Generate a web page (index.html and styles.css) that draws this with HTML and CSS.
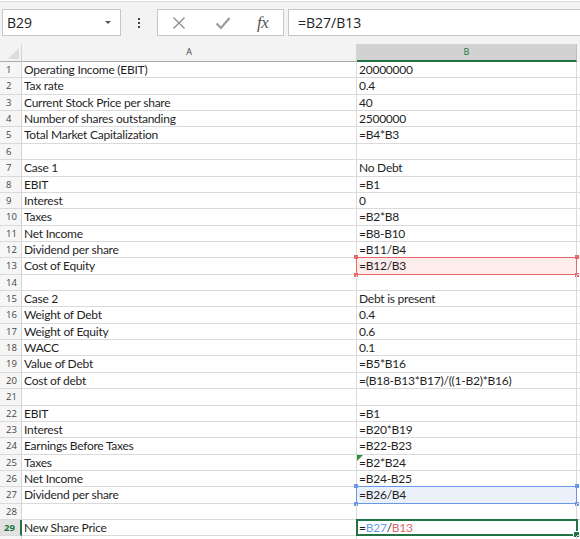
FILE: index.html
```html
<!DOCTYPE html>
<html>
<head>
<meta charset="utf-8">
<link rel="stylesheet" href="styles.css">
</head>
<body>
<div class="toolbar">
  <div class="namebox"><span class="ref">B29</span><span class="caret"></span></div>
  <div class="dots"><i></i><i></i><i></i></div>
  <div class="fxbox">
    <svg class="ico" width="14" height="14" viewBox="0 0 14 14"><path d="M1.5 1.5 L12.5 12.5 M12.5 1.5 L1.5 12.5" stroke="#8f8f8f" stroke-width="1.4" fill="none"/></svg>
    <svg class="ico" width="16" height="14" viewBox="0 0 16 14"><path d="M1.5 7.5 L6 12 L14.5 2" stroke="#9a9a9a" stroke-width="2.2" fill="none"/></svg>
    <span class="fx">fx</span>
  </div>
  <div class="formula">=B27/B13</div>
</div>
<div class="sheet">
  <div class="hrow">
    <div class="corner"><span class="tri"></span></div>
    <div class="ch ca">A</div>
    <div class="ch cb">B</div>
    <div class="ch crest"></div>
  </div>
  <div class="row"><div class="rh">1</div><div class="c ca">Operating Income (EBIT)</div><div class="c cb">20000000</div><div class="c crest"></div></div>
  <div class="row"><div class="rh">2</div><div class="c ca">Tax rate</div><div class="c cb">0.4</div><div class="c crest"></div></div>
  <div class="row"><div class="rh">3</div><div class="c ca">Current Stock Price per share</div><div class="c cb">40</div><div class="c crest"></div></div>
  <div class="row"><div class="rh">4</div><div class="c ca">Number of shares outstanding</div><div class="c cb">2500000</div><div class="c crest"></div></div>
  <div class="row"><div class="rh">5</div><div class="c ca">Total Market Capitalization</div><div class="c cb">=B4*B3</div><div class="c crest"></div></div>
  <div class="row"><div class="rh">6</div><div class="c ca"></div><div class="c cb"></div><div class="c crest"></div></div>
  <div class="row"><div class="rh">7</div><div class="c ca">Case 1</div><div class="c cb">No Debt</div><div class="c crest"></div></div>
  <div class="row"><div class="rh">8</div><div class="c ca">EBIT</div><div class="c cb">=B1</div><div class="c crest"></div></div>
  <div class="row"><div class="rh">9</div><div class="c ca">Interest</div><div class="c cb">0</div><div class="c crest"></div></div>
  <div class="row"><div class="rh">10</div><div class="c ca">Taxes</div><div class="c cb">=B2*B8</div><div class="c crest"></div></div>
  <div class="row"><div class="rh">11</div><div class="c ca">Net Income</div><div class="c cb">=B8-B10</div><div class="c crest"></div></div>
  <div class="row"><div class="rh">12</div><div class="c ca">Dividend per share</div><div class="c cb">=B11/B4</div><div class="c crest"></div></div>
  <div class="row"><div class="rh">13</div><div class="c ca">Cost of Equity</div><div class="c cb hl-red">=B12/B3<span class="box red"><i class="k tl"></i><i class="k tr"></i><i class="k bl"></i><i class="k br"></i></span></div><div class="c crest"></div></div>
  <div class="row"><div class="rh">14</div><div class="c ca"></div><div class="c cb"></div><div class="c crest"></div></div>
  <div class="row"><div class="rh">15</div><div class="c ca">Case 2</div><div class="c cb">Debt is present</div><div class="c crest"></div></div>
  <div class="row"><div class="rh">16</div><div class="c ca">Weight of Debt</div><div class="c cb">0.4</div><div class="c crest"></div></div>
  <div class="row"><div class="rh">17</div><div class="c ca">Weight of Equity</div><div class="c cb">0.6</div><div class="c crest"></div></div>
  <div class="row"><div class="rh">18</div><div class="c ca">WACC</div><div class="c cb">0.1</div><div class="c crest"></div></div>
  <div class="row"><div class="rh">19</div><div class="c ca">Value of Debt</div><div class="c cb">=B5*B16</div><div class="c crest"></div></div>
  <div class="row"><div class="rh">20</div><div class="c ca">Cost of debt</div><div class="c cb">=(B18-B13*B17)/((1-B2)*B16)</div><div class="c crest"></div></div>
  <div class="row"><div class="rh">21</div><div class="c ca"></div><div class="c cb"></div><div class="c crest"></div></div>
  <div class="row"><div class="rh">22</div><div class="c ca">EBIT</div><div class="c cb">=B1</div><div class="c crest"></div></div>
  <div class="row"><div class="rh">23</div><div class="c ca">Interest</div><div class="c cb">=B20*B19</div><div class="c crest"></div></div>
  <div class="row"><div class="rh">24</div><div class="c ca">Earnings Before Taxes</div><div class="c cb">=B22-B23</div><div class="c crest"></div></div>
  <div class="row"><div class="rh">25</div><div class="c ca">Taxes</div><div class="c cb">=B2*B24<span class="err"></span></div><div class="c crest"></div></div>
  <div class="row"><div class="rh">26</div><div class="c ca">Net Income</div><div class="c cb">=B24-B25</div><div class="c crest"></div></div>
  <div class="row"><div class="rh">27</div><div class="c ca">Dividend per share</div><div class="c cb hl-blue">=B26/B4<span class="box blue"><i class="k tl"></i><i class="k tr"></i><i class="k bl"></i><i class="k br"></i></span></div><div class="c crest"></div></div>
  <div class="row"><div class="rh">28</div><div class="c ca"></div><div class="c cb"></div><div class="c crest"></div></div>
  <div class="row"><div class="rh rsel">29</div><div class="c ca">New Share Price</div><div class="c cb">=<span class="rb">B27</span>/<span class="rr">B13</span><span class="box active"><i class="handle"></i></span></div><div class="c crest"></div></div>
  <div class="row"><div class="rh"></div><div class="c ca"></div><div class="c cb"></div><div class="c crest"></div></div>
</div>
</body>
</html>
```
FILE: styles.css
```css
html, body {
  margin: 0;
  padding: 0;
  background: #ffffff;
}
body {
  width: 580px;
  height: 539px;
  overflow: hidden;
  font-family: "Lato", "Liberation Sans", sans-serif;
  color: #1f1f1f;
}
.toolbar {
  margin-top: 1px;
  border-top: 1px solid #d9d9d9;
  height: 41px;
  box-sizing: border-box;
  background: #f3f3f3;
  display: flex;
  align-items: flex-start;
  padding-top: 7px;
  padding-left: 2px;
}
.namebox {
  width: 119px;
  height: 27px;
  box-sizing: border-box;
  background: #fff;
  border: 1px solid #c6c6c6;
  display: flex;
  align-items: center;
  justify-content: space-between;
  padding: 0 9px 0 4px;
}
.ref {
  font-family: "Open Sans", "Liberation Sans", sans-serif;
  font-size: 14px;
  color: #222;
}
.caret {
  width: 0;
  height: 0;
  border-left: 3px solid transparent;
  border-right: 3px solid transparent;
  border-top: 3px solid #555;
}
.dots {
  width: 36px;
  height: 27px;
  display: flex;
  flex-direction: column;
  align-items: center;
  justify-content: center;
  gap: 2px;
}
.dots i {
  display: block;
  width: 2px;
  height: 2px;
  background: #444;
}
.fxbox {
  width: 127px;
  height: 27px;
  box-sizing: border-box;
  background: #fff;
  border: 1px solid #c6c6c6;
  display: flex;
  align-items: center;
  padding-left: 14px;
}
.ico {
  display: block;
}
.fxbox .ico:first-child {
  margin-right: 29px;
}
.fxbox .ico:nth-child(2) {
  margin-right: 26px;
}
.fx {
  font-family: "Liberation Serif", "DejaVu Serif", serif;
  font-style: italic;
  font-size: 17px;
  color: #555;
  letter-spacing: -0.5px;
}
.formula {
  margin-left: 4px;
  flex: 1;
  height: 27px;
  box-sizing: border-box;
  background: #fff;
  border: 1px solid #c6c6c6;
  border-right: none;
  padding-left: 9px;
  font-family: "Open Sans", "Liberation Sans", sans-serif;
  font-size: 14px;
  line-height: 25px;
  color: #222;
}
.sheet {
  background: #fff;
}
.hrow {
  display: flex;
  height: 20px;
  box-sizing: border-box;
  background: #f3f3f3;
  padding-top: 2px;
}
.corner {
  width: 22px;
  flex: none;
  box-sizing: border-box;
  border-right: 1px solid #d4d4d4;
  border-bottom: 1px solid #ababab;
  position: relative;
}
.tri {
  position: absolute;
  right: 2px;
  bottom: 2px;
  width: 0;
  height: 0;
  border-left: 11px solid transparent;
  border-bottom: 11px solid #dcdcdc;
}
.ch {
  box-sizing: border-box;
  border-right: 1px solid #d4d4d4;
  border-bottom: 1px solid #ababab;
  font-family: "Open Sans", "Liberation Sans", sans-serif;
  font-size: 9px;
  line-height: 16px;
  text-align: center;
  color: #444;
}
.ca {
  width: 335px;
  flex: none;
}
.cb {
  width: 220px;
  flex: none;
}
.crest {
  flex: 1;
  border-right: none;
}
.hrow .cb {
  background: #d2d2d2;
  color: #217346;
  border-bottom: 2px solid #217346;
  border-right: 1px solid #bdbdbd;
}
.hrow .crest {
  border-bottom: none;
}
.row {
  display: flex;
  height: 16.36px;
  box-sizing: border-box;
}
.rh {
  width: 22px;
  flex: none;
  box-sizing: border-box;
  background: #f6f6f6;
  border-right: 1px solid #d4d4d4;
  border-bottom: 1px solid #dadada;
  font-family: "Open Sans", "Liberation Sans", sans-serif;
  font-size: 9.5px;
  line-height: 16px;
  padding-left: 6px;
  color: #444;
}
.rsel {
  background: #e1e1e1;
  color: #217346;
  font-weight: bold;
  border-right: 2px solid #217346;
  padding-left: 4px;
}
.c {
  box-sizing: border-box;
  border-right: 1px solid #dadada;
  border-bottom: 1px solid #dadada;
  font-size: 12px;
  letter-spacing: -0.25px;
  line-height: 16px;
  padding-left: 2px;
  white-space: nowrap;
  position: relative;
}
.c.crest {
  border-right: none;
}
.hl-red {
  background: #fdecec;
}
.hl-blue {
  background: #ebf1fb;
}
.box {
  position: absolute;
  left: -1px;
  top: -1px;
  right: -1px;
  bottom: -1px;
  box-sizing: border-box;
}
.box.red {
  border: 1px solid #e46a6a;
}
.box.blue {
  border: 1px solid #6b98e6;
}
.box.active {
  border: 2px solid #217346;
  right: -2px;
}
.k {
  position: absolute;
  width: 4px;
  height: 4px;
}
.red .k { background: #e46a6a; }
.blue .k { background: #6b98e6; }
.tl { left: -3px; top: -3px; }
.tr { right: -3px; top: -3px; }
.bl { left: -3px; bottom: -3px; }
.br { right: -3px; bottom: -3px; }
.handle {
  position: absolute;
  right: -4px;
  bottom: -4px;
  width: 5px;
  height: 5px;
  background: #217346;
  border: 1px solid #fff;
}
.rb { color: #6d9eeb; }
.rr { color: #e06666; }
.err {
  position: absolute;
  left: 0;
  top: 0;
  width: 0;
  height: 0;
  border-top: 6px solid #2e8b3e;
  border-right: 6px solid transparent;
}
```
